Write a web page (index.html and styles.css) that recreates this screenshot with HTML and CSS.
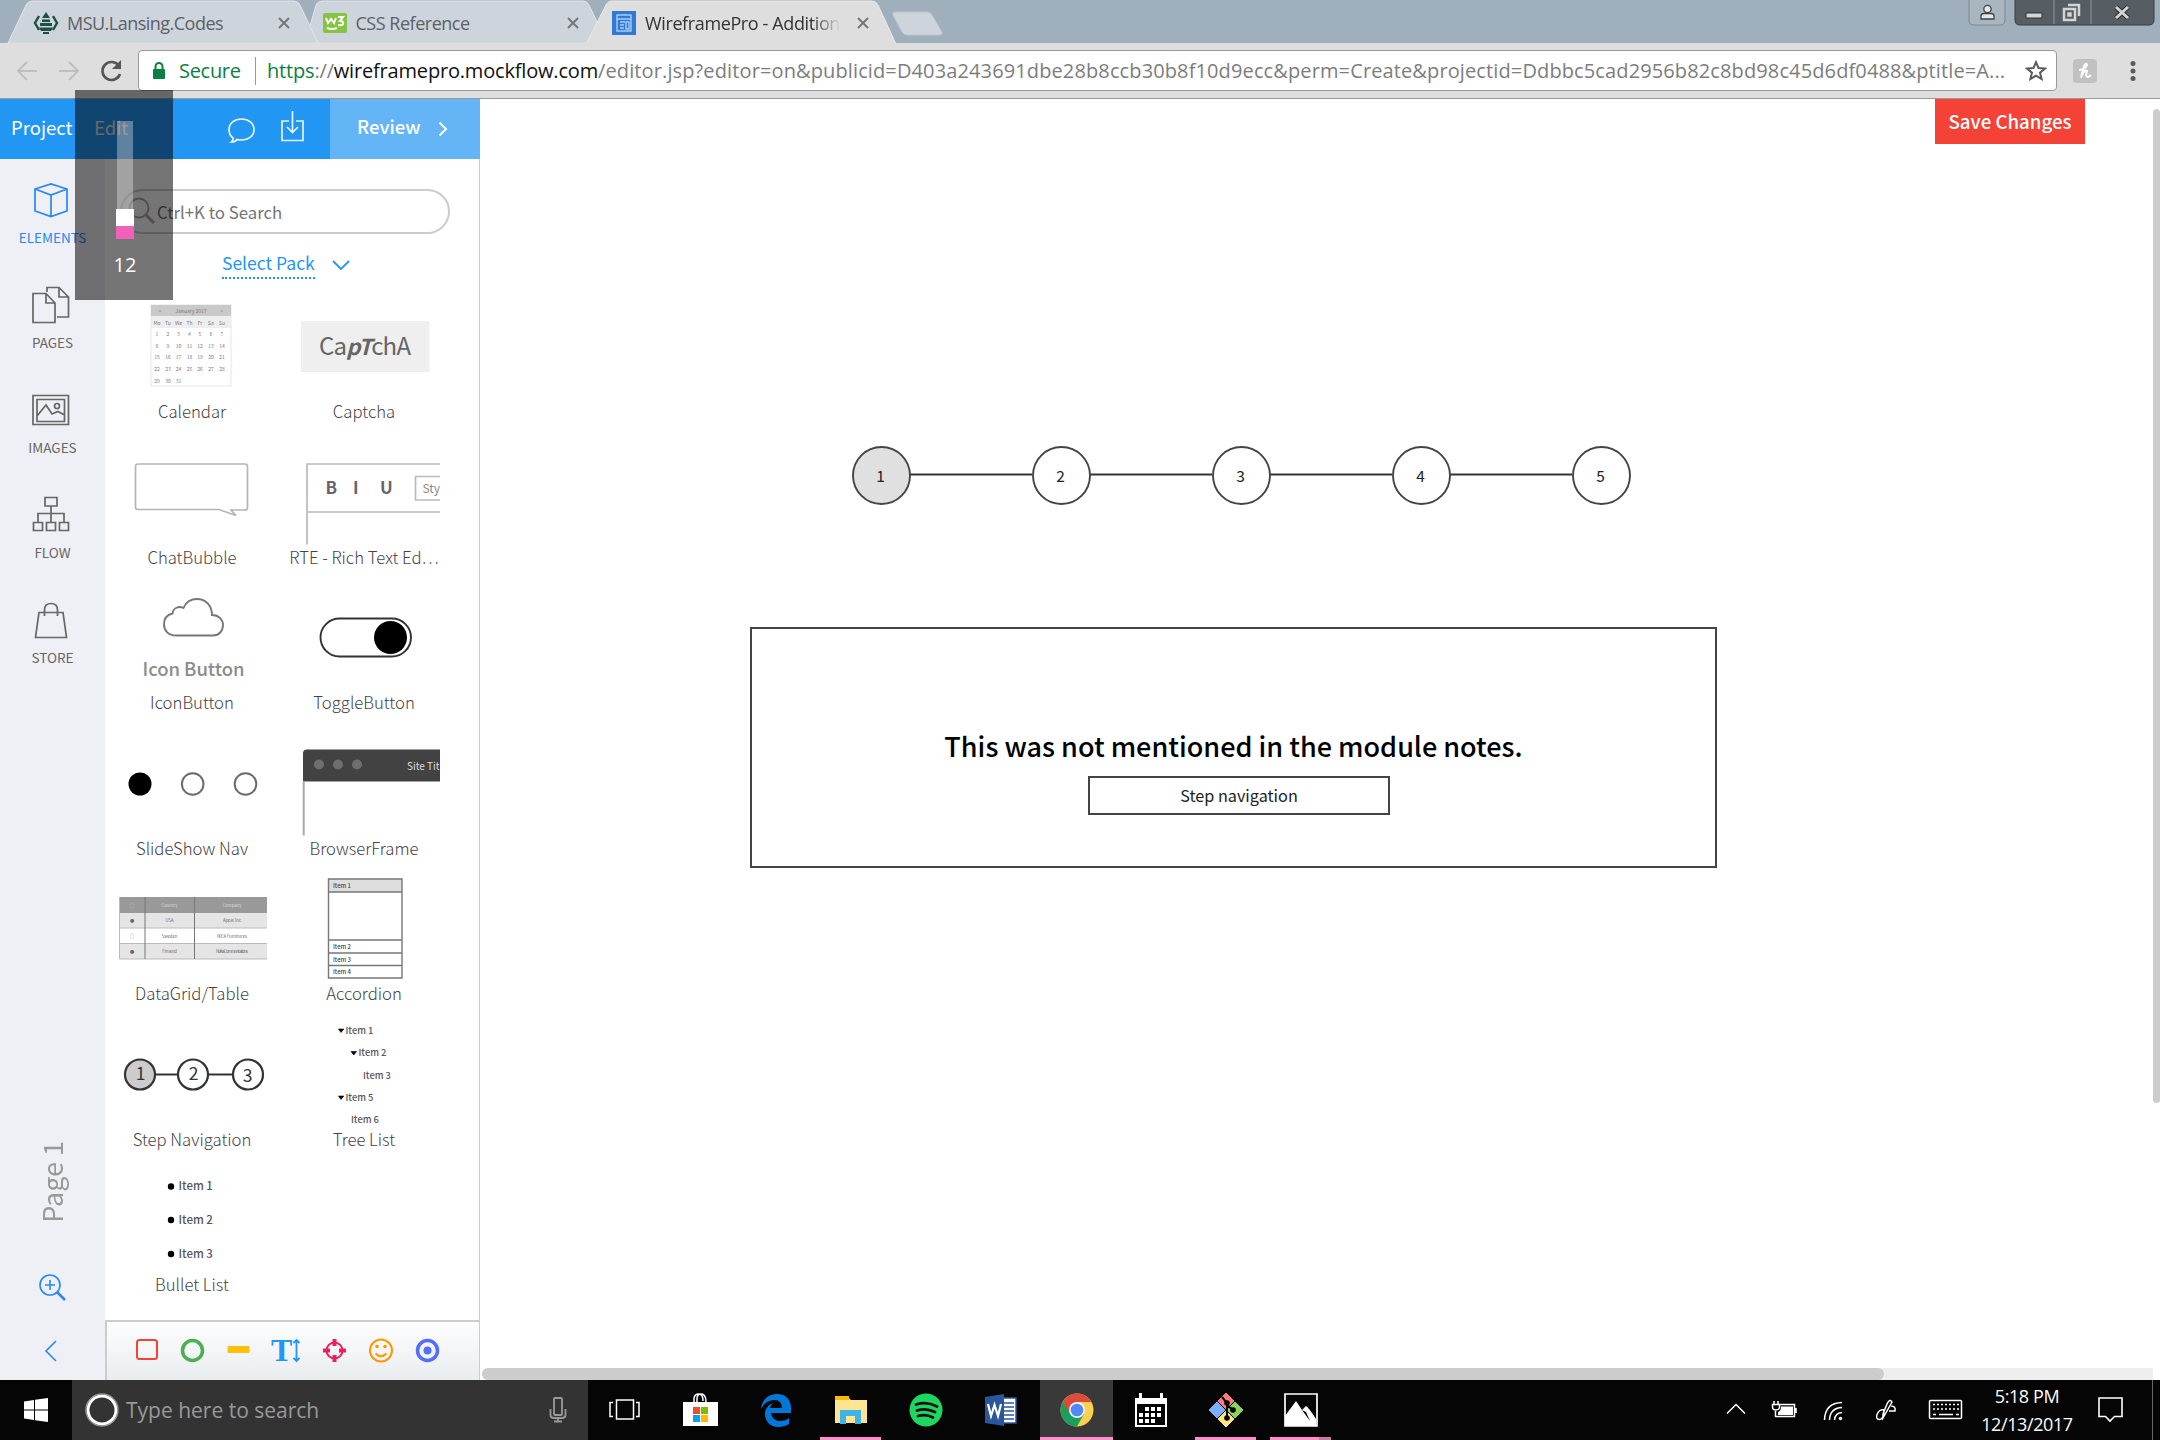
FILE: index.html
```html
<!DOCTYPE html>
<html lang="en">
<head>
<meta charset="utf-8">
<title>WireframePro - Additional</title>
<link rel="stylesheet" href="styles.css">
</head>
<body>
<div class="screen">
  <header class="tabstrip">
    <svg class="tabshapes" width="960" height="43" viewBox="0 0 960 43">
      <path d="M8 43L26 5Q28 1 32 1H294Q298 1 300 5L318 43Z" fill="#cdd4dc" stroke="#dfe5ea"/>
      <path d="M318 43L310 26L316 5Q318 1 322 1H583Q587 1 589 5L607 43Z" fill="#cdd4dc" stroke="#dfe5ea"/>
      <path d="M586 44L605 7Q607 1 612 1H872Q876 1 878 5L896 44Z" fill="#dedede" stroke="#e9e9e9"/>
      <path d="M896 12H927Q931 12 932 15L942 32Q943 35 939 35H908Q904 35 902 32L893 15Q892 12 896 12Z" fill="#cdd4dc" stroke="#bcc5ce"/>
    </svg>
    <div class="tab">
      <svg width="26" height="24" viewBox="0 0 26 24" fill="none" stroke="#1d4f45" stroke-width="2.4"><path d="M6 5L2 12L6 19M20 5L24 12L20 19"/><path d="M13 1L9 7H17ZM9 8.500H17V11H9ZM7 12H19V15H7ZM6 16.500H20L18 20H8ZM10 21H16V23H10Z" fill="#1d4f45" stroke="none"/></svg>
      <span class="tabname t1">MSU.Lansing.Codes</span><svg class="x" width="12" height="12" viewBox="0 0 12 12"><path d="M1 1L11 11M11 1L1 11"/></svg>
    </div>
    <div class="tab">
      <svg width="25" height="24" viewBox="0 0 25 24"><rect y="2" width="24" height="20" rx="2" fill="#84c441"/><path d="M3 7L5 12L8 8L11 12L13 7M15 6H20L17 10Q21 10 20 13Q19 15 15 14M4 17Q9 19 14 17" fill="none" stroke="#fff" stroke-width="2"/></svg>
      <span class="tabname t2">CSS Reference</span><svg class="x" width="12" height="12" viewBox="0 0 12 12"><path d="M1 1L11 11M11 1L1 11"/></svg>
    </div>
    <div class="tab active">
      <svg width="25" height="24" viewBox="0 0 25 24"><rect width="24" height="24" fill="#2f7bd2"/><path d="M5 4H19V20H5ZM5 8H19M8 11H13M8 14H12M8 17H12M14 11H17V18H14Z" fill="none" stroke="#a9cdf5" stroke-width="1.4"/></svg>
      <span class="tabname t3">WireframePro - Addition</span><svg class="x" width="12" height="12" viewBox="0 0 12 12"><path d="M1 1L11 11M11 1L1 11"/></svg>
    </div>
    <svg class="wincontrols" width="192" height="28" viewBox="1968 0 192 28">
      <path d="M1969 -2V20Q1969 25 1974 25H2000Q2005 25 2005 20V-2" fill="#a9b5bf" stroke="#7c8791"/>
      <g fill="#e4e6e8" stroke="#3e4347" stroke-width="1.3"><circle cx="1987.500" cy="9" r="3.700"/><path d="M1981 19V16Q1981 13.500 1984 13.500H1991Q1994 13.500 1994 16V19Z"/></g>
      <path d="M2015 -2V20Q2015 25 2020 25H2149Q2154 25 2154 20V-2" fill="#565d63" stroke="#393f44"/>
      <path d="M2054 0V24M2091 0V24" stroke="#8e969c"/>
      <path d="M2026 13H2042V18H2026Z" fill="#d4d4d4" stroke="#2f3336"/>
      <g fill="none" stroke="#d4d4d4" stroke-width="2.500"><path d="M2068 5H2079V16M2064 9H2075V20H2064ZM2068.500 13.500H2070.500V15.500H2068.500Z"/></g>
      <path d="M2116 7L2128 18M2128 7L2116 18" stroke="#292d30" stroke-width="5"/><path d="M2116 7L2128 18M2128 7L2116 18" stroke="#d4d4d4" stroke-width="3"/>
    </svg>
  </header>

  <div class="toolbar">
    <svg class="navbtns" width="138" height="55" viewBox="0 43 138 55" fill="none" stroke="#bfbfbf" stroke-width="2"><path d="M37 71H19M27 62L18 71L27 80M59 71H77M69 62L78 71L69 80"/><path d="M119 66A9 9 0 1 0 120 74" stroke="#555" stroke-width="2.600"/><path d="M121 60V69H112Z" fill="#555" stroke="none"/></svg>
    <div class="omnibox">
      <svg width="14" height="18" viewBox="0 0 14 18"><path d="M3.500 8V4.500a3.500 3.500 0 0 1 7 0V8" fill="none" stroke="#0b8043" stroke-width="2"/><rect x="1" y="7" width="12" height="10" rx="1" fill="#0b8043"/></svg>
      <span class="secure">Secure</span>
      <span class="url"><span class="green">https</span>://<b>wireframepro.mockflow.com</b><span class="path">/editor.jsp?editor=on&amp;publicid=D403a243691dbe28b8ccb30b8f10d9ecc&amp;perm=Create&amp;projectid=Ddbbc5cad2956b82c8bd98c45d6df0488&amp;ptitle=A...</span></span>
      <svg class="star" width="22" height="21" viewBox="0 0 22 21"><path d="M11 2.200L13.500 8L20 8.500L15 12.700L16.600 19L11 15.600L5.400 19L7 12.700L2 8.500L8.500 8Z" fill="none" stroke="#5a5a5a" stroke-width="2"/></svg>
    </div>
    <svg class="toolicons" width="80" height="30" viewBox="2065 56 80 30"><rect x="2073" y="59" width="24" height="24" rx="4" fill="#c1c1c1"/><path d="M2079 70Q2086 69 2087 65Q2086 62 2084 66L2081 78M2082 75Q2085 69 2087 71L2086 75Q2087 79 2091 75" fill="none" stroke="#fff" stroke-width="2"/><g fill="#5a5a5a"><circle cx="2133" cy="63.500" r="2.500"/><circle cx="2133" cy="71" r="2.500"/><circle cx="2133" cy="78.500" r="2.500"/></g></svg>
  </div>

  <main class="app">
    <aside class="left">
      <div class="menubar">
        <div class="menu"><span class="m1">Project</span><span class="m2">Edit</span>
          <svg width="80" height="40" viewBox="226 108 80 40" fill="none" stroke="#e8f4ff" stroke-width="1.700"><path d="M233 137Q229 134 229 128.500C229 122 234.500 118 241.500 118S254 122 254 128.500S248.500 139 241.500 139Q239 139 237 138.500Q235.500 141 231.500 141Q233.500 139.500 233 137Z"/><path d="M289 120H282V139.500H303V120H296M292.500 110V131M287 126L292.500 131.500L298 126"/></svg>
        </div>
        <div class="review"><span>Review</span><svg width="10" height="16" viewBox="0 0 10 16"><path d="M1.500 1.500L8 8L1.500 14.500" fill="none" stroke="#fff" stroke-width="2"/></svg></div>
      </div>
      <div class="body">
        <nav class="rail">
          <div class="navitem on"><svg width="105" height="56" viewBox="0 170 105 56"><path d="M35 189L51 184L67 189V211L51 216.500L35 211ZM35 189L51 195L67 189M51 195V216"/></svg><span>ELEMENTS</span></div>
          <div class="navitem"><svg width="105" height="56" viewBox="0 275 105 56"><path d="M33 293.500H46L55 303V322.500H33ZM46 293.500V303H55M47 292V287.500H59L68.500 297V317H57M59 287.500V297H68.500"/></svg><span>PAGES</span></div>
          <div class="navitem"><svg width="105" height="56" viewBox="0 380 105 56"><path d="M33 395.500H68.500V424.500H33ZM37 399.500H64.500V421.500H37ZM37 416L46 405L52 414L58 411.500L64.500 415"/><circle cx="57" cy="406" r="2.500"/></svg><span>IMAGES</span></div>
          <div class="navitem"><svg width="105" height="56" viewBox="0 485 105 56"><path d="M45 497.500H57V506H45ZM51 506V522M38 522V513.500H64V522M33.500 522.500H42.500V530.500H33.500ZM46.500 522.500H55.500V530.500H46.500ZM59.500 522.500H68.500V530.500H59.500Z"/></svg><span>FLOW</span></div>
          <div class="navitem"><svg width="105" height="56" viewBox="0 590 105 56"><path d="M39 612.500H63L66.500 637.500H35.500ZM44.500 616V610Q44.500 603.500 51 603.500T57.500 610V616"/></svg><span>STORE</span></div>
          <div class="pagename">Page 1</div>
          <svg class="railfoot" width="105" height="120" viewBox="0 1260 105 120" fill="none" stroke="#2788f5" stroke-width="1.600"><circle cx="50" cy="1285" r="10"/><path d="M45 1285H55M50 1280V1290"/><path d="M57 1292L65 1300" stroke-width="2.500"/><path d="M56 1341L46 1351L56 1361"/></svg>
        </nav>
        <section class="panel">
          <div class="search"><svg width="30" height="30" viewBox="0 0 30 30" fill="none" stroke="#aaa" stroke-width="1.800"><circle cx="12" cy="11" r="9.500"/><path d="M19 18L27 26" stroke-width="3"/></svg><span>Ctrl+K to Search</span></div>
          <div class="pack"><span>Select Pack</span><svg width="18" height="10" viewBox="0 0 18 10"><path d="M1 1L9 9L17 1" fill="none" stroke="#2196f3" stroke-width="1.800"/></svg></div>
          <div class="grid">
            <figure><svg viewBox="106 292 172 108"><rect x="151" y="305" width="80" height="81" fill="#fff" stroke="#e6e6e6"/><path d="M151 305H231V316H151Z" fill="#c9c9c9"/><path d="M151 316H231V328H151Z" fill="#eee"/>
              <g class="cal"><text x="160" y="313">&lt;</text><text x="191" y="313">January 2017</text><text x="222" y="313">&gt;</text>
              <text y="324.500"><tspan x="157">Mo</tspan><tspan x="168">Tu</tspan><tspan x="178.500">We</tspan><tspan x="189.500">Th</tspan><tspan x="200">Fr</tspan><tspan x="211">Sa</tspan><tspan x="222">Su</tspan></text>
              <text y="336"><tspan x="157">1</tspan><tspan x="168">2</tspan><tspan x="178.500">3</tspan><tspan x="189.500">4</tspan><tspan x="200">5</tspan><tspan x="211">6</tspan><tspan x="222">7</tspan></text>
              <text y="347.500"><tspan x="157">8</tspan><tspan x="168">9</tspan><tspan x="178.500">10</tspan><tspan x="189.500">11</tspan><tspan x="200">12</tspan><tspan x="211">13</tspan><tspan x="222">14</tspan></text>
              <text y="359"><tspan x="157">15</tspan><tspan x="168">16</tspan><tspan x="178.500">17</tspan><tspan x="189.500">18</tspan><tspan x="200">19</tspan><tspan x="211">20</tspan><tspan x="222">21</tspan></text>
              <text y="371"><tspan x="157">22</tspan><tspan x="168">23</tspan><tspan x="178.500">24</tspan><tspan x="189.500">25</tspan><tspan x="200">26</tspan><tspan x="211">27</tspan><tspan x="222">28</tspan></text>
              <text y="382.500"><tspan x="157">29</tspan><tspan x="168">30</tspan><tspan x="178.500">31</tspan></text></g></svg><figcaption>Calendar</figcaption></figure>
            <figure><svg viewBox="278 292 172 108"><rect x="301" y="321" width="128.500" height="51" fill="#efefef"/><text class="cap" x="319" y="354.500" textLength="92">Ca<tspan font-weight="700" font-style="italic" font-size="22">pT</tspan>chA</text></svg><figcaption>Captcha</figcaption></figure>
            <figure><svg viewBox="106 437.500 172 108"><path d="M138 463.500H245Q247.500 463.500 247.500 466V507Q247.500 509.500 245 509.500H231L236 515L219 509H138Q135.500 509 135.500 507V466Q135.500 463.500 138 463.500Z" fill="none" stroke="#b5b5b5" stroke-width="1.700"/></svg><figcaption>ChatBubble</figcaption></figure>
            <figure><svg viewBox="278 437.500 172 108"><path d="M440 463.500H307V544M307 511.500H440M440 476H415.500V499.500H440" fill="none" stroke="#bbb" stroke-width="1.700"/><g class="biu"><text x="325.500" y="493.500">B</text><text x="353" y="493.500">I</text><text x="380" y="493.500">U</text></g><text x="422.500" y="492.500" font-size="12" fill="#8a8a8a">Sty</text></svg><figcaption>RTE - Rich Text Ed…</figcaption></figure>
            <figure><svg viewBox="106 583 172 108"><path d="M176 635.500C168 635.500 164 630 164 624.500C164 618 168 614.500 172.500 613.500C173 608 179 605.500 183.500 608C186 602 191 599 197 599C206 599 212 606 212 615C219 615 223 620 223 625C223 631 219 635.500 213 635.500Z" fill="none" stroke="#777" stroke-width="1.900"/><text class="ib" x="142.500" y="676" textLength="102">Icon Button</text></svg><figcaption>IconButton</figcaption></figure>
            <figure><svg viewBox="278 583 172 108"><rect x="320.500" y="618.500" width="90.500" height="38" rx="19" fill="none" stroke="#333" stroke-width="1.900"/><circle cx="390.500" cy="637.500" r="16.500"/></svg><figcaption>ToggleButton</figcaption></figure>
            <figure><svg viewBox="106 728.500 172 108"><circle cx="140" cy="783.500" r="11.500"/><g fill="none" stroke="#6b6b6b" stroke-width="2"><circle cx="192.700" cy="783.500" r="10.800"/><circle cx="245.500" cy="783.500" r="10.800"/></g></svg><figcaption>SlideShow Nav</figcaption></figure>
            <figure><svg viewBox="278 728.500 172 108"><path d="M303 781V753Q303 749 307 749H440V781Z" fill="#424242"/><path d="M303.700 781V835" stroke="#aaa" stroke-width="2"/><g fill="#6e6e6e"><circle cx="319" cy="764" r="5"/><circle cx="338" cy="764" r="5"/><circle cx="357" cy="764" r="5"/></g><text x="407" y="769" font-size="11" fill="#ddd" textLength="32.500" lengthAdjust="spacingAndGlyphs">Site Tit</text></svg><figcaption>BrowserFrame</figcaption></figure>
            <figure><svg viewBox="106 874 172 108"><path d="M119.500 897H267V913H119.500Z" fill="#999"/><path d="M119.500 913H267V928H119.500ZM119.500 943.500H267V959H119.500Z" fill="#e5e5e5"/><path d="M267 959H119.500V897M119.500 928H267M119.500 943.500H267" fill="none" stroke="#bbb"/><path d="M145 897V959M194.500 897V959" stroke="#777"/><g class="tbl"><g fill="#ddd"><text x="132" y="907">○</text><text x="169.500" y="907">Country</text><text x="232" y="907">Company</text></g><text x="132" y="922">●</text><text x="169.500" y="922">USA</text><text x="232" y="922">Apple Inc</text><text x="132" y="938">○</text><text x="169.500" y="938">Sweden</text><text x="232" y="938">IKEA Furnitures</text><text x="132" y="953">●</text><text x="169.500" y="953">Finland</text><text x="232" y="953" textLength="32">Nokia Communications</text></g></svg><figcaption>DataGrid/Table</figcaption></figure>
            <figure><svg viewBox="278 874 172 108"><path d="M328.500 879H402V892H328.500Z" fill="#dedede"/><path d="M328.500 879H402V978H328.500ZM328.500 892H402M328.500 940H402M328.500 953H402M328.500 965.500H402" fill="none" stroke="#777" stroke-width="1.400"/><g class="acc"><text x="333" y="888">Item 1</text><text x="333" y="948.500">Item 2</text><text x="333" y="961.500">Item 3</text><text x="333" y="974">Item 4</text></g></svg><figcaption>Accordion</figcaption></figure>
            <figure><svg viewBox="106 1019.500 172 108"><path d="M155 1074H178M208 1074H234" stroke="#333" stroke-width="2"/><g fill="#fff" stroke="#333" stroke-width="2.200"><circle cx="140" cy="1074" r="15" fill="#ccc"/><circle cx="193" cy="1074" r="15"/><circle cx="248" cy="1074" r="15"/></g><g class="stepn"><text x="140.500" y="1079.500">1</text><text x="193.500" y="1079.500">2</text><text x="247.500" y="1081">3</text></g></svg><figcaption>Step Navigation</figcaption></figure>
            <figure><svg viewBox="278 1019.500 172 108"><path d="M338.500 1028.500H343.800L341 1032ZM351 1051H356.500L353.800 1054.500ZM338.500 1095.500H343.800L341 1099Z" stroke="#000" stroke-width=".6"/><g class="tree"><text x="345.500" y="1033">Item 1</text><text x="358.500" y="1055.500">Item 2</text><text x="363" y="1078">Item 3</text><text x="345.500" y="1100">Item 5</text><text x="351" y="1122.500">Item 6</text></g></svg><figcaption>Tree List</figcaption></figure>
            <figure><svg viewBox="106 1165 172 108"><circle cx="171" cy="1186.500" r="3.200"/><circle cx="171" cy="1220" r="3.200"/><circle cx="171" cy="1254" r="3.200"/><g class="bul"><text x="178.500" y="1190">Item 1</text><text x="178.500" y="1223.500">Item 2</text><text x="178.500" y="1257.500">Item 3</text></g></svg><figcaption>Bullet List</figcaption></figure>
          </div>
          <div class="shapes">
            <svg width="372" height="58" viewBox="107 1322 372 58" fill="none"><rect x="137" y="1340" width="20" height="19" rx="2.500" stroke="#f44336" stroke-width="2"/><circle cx="192.500" cy="1350.500" r="10" stroke="#4caf50" stroke-width="3.500"/><rect x="227.500" y="1346" width="22" height="7" rx="1" fill="#ffc107"/><text class="tt" x="271" y="1361">T</text><path d="M296.500 1341V1360M293.500 1343L296.500 1340L299.500 1343M293.500 1358L296.500 1361L299.500 1358" stroke="#2196f3" stroke-width="1.800"/><circle cx="334.500" cy="1350.500" r="8" stroke="#e91e63" stroke-width="2"/><path d="M334.500 1339V1346M334.500 1355V1362M323 1350.500H330M339 1350.500H346" stroke="#e91e63" stroke-width="4"/><circle cx="381" cy="1350.500" r="11" stroke="#ff9800" stroke-width="2"/><path d="M375.500 1353.500Q381 1359 386.500 1353.500" stroke="#ff9800" stroke-width="2"/><circle cx="377" cy="1346.500" r="1.800" fill="#ff9800"/><circle cx="385" cy="1346.500" r="1.800" fill="#ff9800"/><circle cx="427.500" cy="1350.500" r="10" stroke="#536dfe" stroke-width="3.500"/><circle cx="427.500" cy="1350.500" r="4" fill="#536dfe"/></svg>
          </div>
        </section>
      </div>
    </aside>
    <section class="canvas">
      <svg class="steps" width="780" height="62" viewBox="851 445 780 62"><path d="M910 474.500H1032M1090 474.500H1212M1270 474.500H1392M1450 474.500H1572" stroke="#333" stroke-width="2"/><g fill="#fff" stroke="#444" stroke-width="1.900"><circle cx="881.500" cy="475.500" r="28.500" fill="#e0e0e0"/><circle cx="1061.500" cy="475.500" r="28.500"/><circle cx="1241.500" cy="475.500" r="28.500"/><circle cx="1421.500" cy="475.500" r="28.500"/><circle cx="1601.500" cy="475.500" r="28.500"/></g><g class="num"><text x="880.500" y="481.500">1</text><text x="1060.500" y="481.500">2</text><text x="1240.500" y="481.500">3</text><text x="1420.500" y="481.500">4</text><text x="1600.500" y="481.500">5</text></g></svg>
      <div class="note"><h1>This was not mentioned in the module notes.</h1><div class="stepbtn">Step navigation</div></div>
      <div class="save">Save Changes</div>
      <div class="hscroll"></div><div class="vscroll"></div>
    </section>
  </main>

  <footer class="taskbar">
    <div class="start"><svg width="24" height="24" viewBox="0 0 24 24" fill="#fff"><path d="M0 3.400L10 2V11.500H0ZM11 1.800L24 0V11.500H11ZM0 12.500H10V22L0 20.600ZM11 12.500H24V24L11 22.200Z"/></svg></div>
    <div class="cortana"><svg width="34" height="34" viewBox="0 0 34 34"><circle cx="17" cy="17" r="14" fill="none" stroke="#fff" stroke-width="3"/><circle cx="17" cy="17" r="16" fill="none" stroke="#999" stroke-width="1.500"/></svg><span>Type here to search</span><svg class="mic" width="18" height="26" viewBox="0 0 18 26" fill="none" stroke="#999" stroke-width="1.800"><rect x="5" y="1" width="8" height="17" rx="1"/><path d="M1.500 12V18Q1.500 21 5 21H13Q16.500 21 16.500 18V12M9 21V24M5 24.500H13"/></svg></div>
    <div class="apps">
      <div class="appicon"><svg width="36" height="36" viewBox="0 0 36 36" fill="none" stroke="#fff" stroke-width="1.500"><path d="M8.500 8H25.500V27H8.500ZM5 10.500H2V24.500H5M28 10.500H31V24.500H28"/></svg></div>
      <div class="appicon"><svg width="36" height="36" viewBox="0 0 36 36"><path d="M0 10H35V34H0Z" fill="#fff"/><path d="M11 11V7Q11 2 16 2Q20 2 20 9M14 11V7Q14 2 18 2Q23 2 23 10" fill="none" stroke="#fff" stroke-width="1.500"/><path d="M10 15H17V22H10Z" fill="#f25022"/><path d="M18 15H25V22H18Z" fill="#7fba00"/><path d="M10 23H17V30H10Z" fill="#00a4ef"/><path d="M18 23H25V30H18Z" fill="#ffb900"/></svg></div>
      <div class="appicon"><svg width="36" height="36" viewBox="0 0 36 36"><path d="M3 17C4 7 11 2 19 2C28 2 33 8 33 16V21H13C14 27 18 29 22 29C26 29 29 28 31 26V32C28 34 24 35 20 35C12 35 7 29 7 22C7 17 10 13 15 11C13 13 12 15 12 16H24C24 11 21 8 17 8C11 8 6 11 3 17Z" fill="#0078d7"/></svg></div>
      <div class="appicon open"><svg width="36" height="36" viewBox="0 0 36 36"><path d="M2 5H15L18 8H34V31H2Z" fill="#ffe591"/><path d="M2 4H16V8H2Z" fill="#ffb900"/><path d="M7 18H28V32H22V24H13V32H7Z" fill="#3db5e8"/></svg></div>
      <div class="appicon"><svg width="36" height="36" viewBox="0 0 36 36"><circle cx="18" cy="18" r="16.500" fill="#1ed760"/><path d="M8 12.500Q19 9 29 14.500M9 18.500Q18 15.500 27 20M10 24Q18 21.500 25 25.500" fill="none" stroke="#111" stroke-width="2.800" stroke-linecap="round"/></svg></div>
      <div class="appicon"><svg width="36" height="36" viewBox="0 0 36 36"><path d="M20 6H33V31H20Z" fill="#fff" stroke="#2b579a" stroke-width="1.500"/><path d="M21 11H31M21 15H31M21 19H31M21 23H31M21 27H31" stroke="#2b579a" stroke-width="1.700"/><path d="M2 5L21 2V34L2 31Z" fill="#2b579a"/><path d="M5 12L8 24L11.500 13L15 24L18 12" fill="none" stroke="#fff" stroke-width="2.200"/></svg></div>
      <div class="appicon open current"><svg width="36" height="36" viewBox="0 0 36 36"><circle cx="18" cy="18" r="16.500" fill="#fdd04f"/><path d="M18 18L3.700 9.800A16.500 16.500 0 0 0 18 34.500L25 22Z" fill="#1a9f5c"/><path d="M18 18V10H32.400A16.500 16.500 0 0 0 3.700 9.800L10.500 21Z" fill="#dd4b3e"/><circle cx="18" cy="18" r="8" fill="#f5f5f5"/><circle cx="18" cy="18" r="6.300" fill="#4c8bf5"/></svg></div>
      <div class="appicon"><svg width="36" height="36" viewBox="0 0 36 36"><path d="M2 6H34V35H2Z" fill="#fff"/><path d="M6 1H9V7H6ZM27 1H30V7H27Z" fill="#fff"/><path d="M4 12H32V33H4Z"/><path d="M12 15H16V19H12ZM18 15H22V19H18ZM24 15H28V19H24ZM6 21H10V25H6ZM12 21H16V25H12ZM18 21H22V25H18ZM24 21H28V25H24ZM6 27H10V31H6ZM12 27H16V31H12ZM18 27H22V31H18Z" fill="#fff"/></svg></div>
      <div class="appicon open"><svg width="36" height="36" viewBox="0 0 36 36"><g stroke="#000" stroke-width="1"><path d="M18 0L27 9L18 18L9 9Z" fill="#ff7a7f"/><path d="M27 9L36 18L27 27L18 18Z" fill="#8bd45b"/><path d="M18 18L27 27L18 36L9 27Z" fill="#ffe57f"/><path d="M9 9L18 18L9 27L0 18Z" fill="#7fb0ff"/></g><path d="M14 5L19 11V26M19 13L25 18" fill="none" stroke="#000" stroke-width="2"/><circle cx="19" cy="11" r="2.800"/><circle cx="19" cy="26" r="2.800"/><circle cx="25" cy="18" r="2.800"/></svg></div>
      <div class="appicon open split"><svg width="36" height="36" viewBox="0 0 36 36"><path d="M2 2H34V34H2Z" fill="none" stroke="#fff" stroke-width="1.700"/><path d="M2 24L13 9L19 18L23 14Q26 16 33 27V34H2Z" fill="#fff"/><path d="M19 18L27 29L23 20Z"/></svg></div>
    </div>
    <svg class="tray" width="250" height="60" viewBox="1720 1380 250 60" fill="none" stroke="#fff" stroke-width="1.500"><path d="M1727 1413.500L1736 1404.500L1745 1413.500"/><path d="M1776 1404.500H1794.500V1416.500H1775.500V1411M1796 1408V1413M1774 1401V1405M1778 1401V1405M1772.500 1404.500H1779.500V1407Q1779.500 1410 1776 1410Q1772.500 1410 1772.500 1407Z"/><path d="M1781 1406.500H1793V1415H1778V1412Q1781 1411 1781 1406.500Z" fill="#fff" stroke="none"/><path d="M1824.500 1420Q1825 1403 1842 1402.500M1829.500 1420Q1830 1408 1842 1407.500M1834.500 1420Q1835 1413 1842 1412.500"/><circle cx="1840.500" cy="1418.500" r="1.700" fill="#fff" stroke="none"/><path d="M1884 1410C1878 1408 1873 1420 1880 1419.500C1883 1419 1884 1415 1884 1410M1883 1418L1892 1402Q1890 1398 1887 1404L1883 1414ZM1889 1411H1895Q1896 1406 1891 1406"/><rect x="1929.500" y="1400.500" width="32" height="18" rx="1"/><path d="M1933 1404.500H1959M1933 1409H1959" stroke-dasharray="2 2"/><path d="M1933 1414.500H1936M1939 1414.500H1953M1956 1414.500H1959"/></svg>
    <div class="clock"><span class="time">5:18 PM</span><span class="date">12/13/2017</span></div>
    <svg class="notif" width="26" height="26" viewBox="0 0 26 26" fill="none" stroke="#fff" stroke-width="1.600"><path d="M1 1H24V19.500H16.500L12 24L7.500 19.500H1Z"/></svg>
    <div class="peek"></div>
  </footer>

  <div class="volume"><div class="track"></div><div class="thumb"></div><div class="level"></div><span>12</span></div>
</div>
</body>
</html>
```
FILE: styles.css
```css
* { box-sizing: border-box; }
html, body { height: 1440px; overflow: hidden; }
body { margin: 0; font-family: "Noto Sans CJK SC", "Open Sans", sans-serif; color: #666; }
svg { display: block; flex: none; }
.screen { position: relative; width: 2160px; height: 1440px; overflow: hidden; display: flex; flex-direction: column; background: #fff; }

.tabstrip { position: relative; height: 43px; background: #9fafbc; display: flex; align-items: flex-start; padding-left: 33px; font-family: "Open Sans", sans-serif; flex: none; }
.tabshapes { position: absolute; left: 0; top: 0; }
.tab { position: relative; width: 289.500px; height: 45px; display: flex; align-items: center; color: #5c6165; font-size: 18px; }
.tab > svg:first-child { margin-right: 8px; }
.tab.active { color: #333; }
.tabname { width: 211px; white-space: nowrap; overflow: hidden; line-height: 28px; }
.t1 { letter-spacing: -0.520px; }
.t2 { letter-spacing: -0.480px; }
.t3 { width: 196px; margin-right: 16px; letter-spacing: -0.380px; -webkit-mask-image: linear-gradient(90deg, #000 85%, transparent); mask-image: linear-gradient(90deg, #000 85%, transparent); }
.x { stroke: #777; stroke-width: 2; }
.wincontrols { margin-left: auto; }

.toolbar { height: 56px; background: #dedede; border-bottom: 1px solid #999; display: flex; align-items: center; flex: none; font-family: "Open Sans", sans-serif; }
.omnibox { width: 1919px; height: 41px; border: 1px solid #999; border-radius: 4px; background: #fff; display: flex; align-items: center; padding: 0 9px 0 13px; font-size: 20px; white-space: nowrap; }
.secure { color: #0b8043; margin-left: 13px; width: 76px; letter-spacing: -0.300px; }
.url { border-left: 1px solid #999; padding-left: 11px; line-height: 28px; color: #7d7d7d; width: 1760px; letter-spacing: -0.180px; }
.url b { font-weight: 400; color: #111; }
.path { letter-spacing: 0.120px; }
.green { color: #0b8043; }
.star { margin-left: auto; }
.toolicons { margin-left: 8px; }

.app { flex: 1; display: flex; min-height: 0; }
.left { width: 481px; display: flex; flex-direction: column; }
.menubar { height: 60px; width: 480px; display: flex; color: #fff; font-size: 18.500px; flex: none; }
.menu { width: 330px; background: #2196f3; display: flex; align-items: center; padding-left: 11px; }
.menu span { position: relative; top: -2px; }
.m1 { width: 83px; }
.m2 { width: 132px; color: #e8e0dc; }
.review { width: 150px; background: #64b5f6; display: flex; align-items: center; padding-left: 27px; font-weight: 500; }
.review span { width: 81px; position: relative; top: -3px; }
.body { flex: 1; display: flex; }
.rail { width: 105px; background: #eff0f5; padding-top: 11px; display: flex; flex-direction: column; }
.navitem { height: 105px; text-align: center; font-size: 13.500px; line-height: 23px; flex: none; }
.navitem svg { fill: none; stroke: #666; stroke-width: 1.700; }
.navitem.on { color: #2788f5; }
.navitem.on svg { stroke: #2788f5; }
.pagename { writing-mode: vertical-rl; transform: rotate(180deg); align-self: center; font-size: 27px; line-height: 40px; color: #999; margin: auto 2px 37px 0; }
.panel { width: 375px; border-right: 1px solid #ccc; display: flex; flex-direction: column; }
.search { margin: 30px 0 0 15px; width: 330px; height: 45px; border: 2px solid #ccc; border-radius: 23px; display: flex; align-items: center; padding-left: 5px; font-size: 16.800px; color: #757575; }
.pack { height: 57px; padding: 17px 0 0 117px; display: flex; font-size: 17.500px; color: #2196f3; }
.pack span { height: 28px; line-height: 24px; border-bottom: 2px dotted #2196f3; margin-right: 17px; }
.pack svg { margin-top: 9px; }
.grid { display: grid; grid-template-columns: 172px 172px; grid-auto-rows: 145.500px; margin-left: 1px; padding-top: 1px; height: 1029px; }
figure { margin: 0; text-align: center; font-size: 16.700px; }
figure > svg { width: 172px; height: 108px; }
figcaption { line-height: 23px; font-weight: 300; color: #444; white-space: nowrap; }
.cal { font-size: 5px; text-anchor: middle; fill: #777; }
.cap { font-size: 24px; fill: #666; }
.biu { font-size: 17px; font-weight: 700; fill: #666; }
.ib { font-size: 18.500px; font-weight: 500; fill: #8c8c8c; }
.tbl { font-size: 4.200px; text-anchor: middle; fill: #666; }
.acc { font-size: 6px; fill: #444; font-weight: 500; }
.stepn { font-size: 17.500px; text-anchor: middle; fill: #333; }
.tree { font-size: 9.300px; fill: #555; font-weight: 500; }
.bul { font-size: 11.500px; fill: #555; font-weight: 500; }
.tt { font: 700 32px "Liberation Serif", serif; fill: #2196f3; }
.shapes { margin-top: auto; height: 60px; border-top: 2px solid #ccc; border-left: 2px solid #ccc; background: linear-gradient(#fdfdfd, #e9edf0); }

.canvas { position: relative; flex: 1; background: #fff; }
.steps { position: absolute; left: 370px; top: 346px; }
.num { font-size: 15.500px; text-anchor: middle; fill: #222; }
.note { position: absolute; left: 269px; top: 528px; width: 967px; height: 241px; border: 2px solid #444; display: flex; flex-direction: column; align-items: center; padding-top: 94px; }
.note h1 { margin: 0; font-size: 27px; line-height: 46px; font-weight: 500; color: #000; white-space: nowrap; }
.stepbtn { margin: 7px 0 0 11px; width: 302px; height: 39px; border: 2px solid #444; text-align: center; font-size: 16.200px; line-height: 34px; color: #222; }
.save { position: absolute; left: 1454px; top: 0; width: 150px; height: 45px; background: #f44336; color: #fff; text-align: center; font-size: 18.700px; line-height: 44px; font-weight: 500; }
.hscroll { position: absolute; left: 1px; right: 7px; bottom: 0; height: 12px; background: #eee; border-radius: 6px 0 0 6px; }
.hscroll::before { content: ""; display: block; width: 1402px; height: 12px; border-radius: 6px; background: #ccc; }
.vscroll { position: absolute; right: 0; top: 10px; width: 7px; height: 994px; background: #ccc; border-radius: 4px; }

.taskbar { height: 60px; background: #050505; display: flex; align-items: center; flex: none; font-family: "Open Sans", sans-serif; }
.start { width: 72px; padding-left: 24px; }
.cortana { width: 516px; height: 60px; background: #333; display: flex; align-items: center; padding-left: 13px; color: #999; font-size: 21px; }
.cortana span { margin-left: 7px; width: 423px; }
.apps { display: flex; width: 1132px; height: 60px; }
.appicon { width: 75px; height: 60px; display: flex; align-items: center; justify-content: center; border-bottom: 3px solid transparent; padding-top: 3px; }
.open { width: 61px; margin: 0 7px; border-bottom-color: #ff8fcb; }
.current { width: 73px; margin: 0 0 0 2px; background: #393939; }
.split { border-image: linear-gradient(90deg, #ff8fcb 47px, #c777a4 47px) 3; border-width: 0 0 3px; border-style: solid; }
.clock { width: 114px; display: flex; flex-direction: column; align-items: center; color: #fff; font-size: 18px; line-height: 28px; letter-spacing: -0.400px; }
.notif { margin-left: 14px; }
.peek { width: 1px; height: 60px; background: #666; margin-left: 28px; }

.volume { position: absolute; left: 75px; top: 90px; width: 98px; height: 210px; background: rgba(0, 0, 0, 0.540); display: flex; flex-direction: column; align-items: center; padding: 31px 0 0 2px; color: #fff; font: 20px "Open Sans", sans-serif; }
.track { width: 16px; height: 88px; background: rgba(255, 255, 255, 0.330); }
.thumb { width: 18px; height: 17px; background: #fff; }
.level { width: 18px; height: 13px; background: #f062b9; }
.volume span { margin-top: 12px; line-height: 28px; }
```
